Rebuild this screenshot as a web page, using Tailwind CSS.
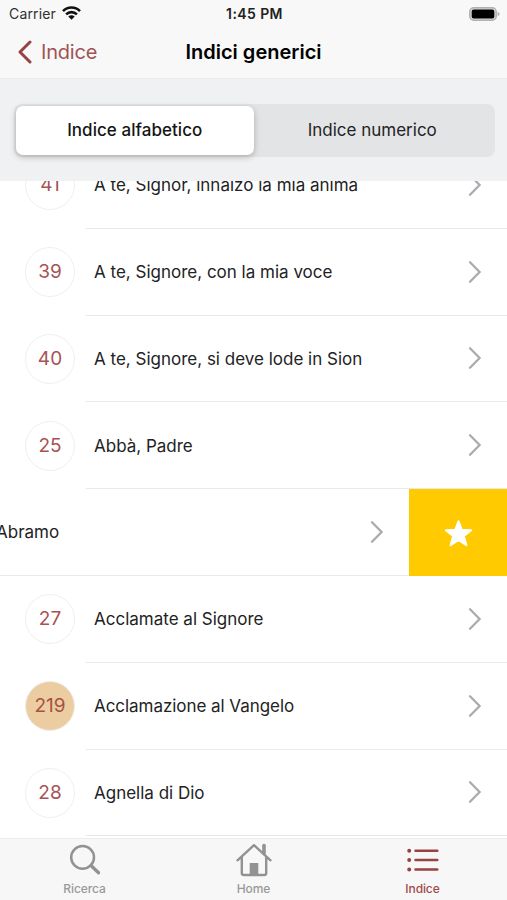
<!doctype html>
<html lang="it">
    <head>
        <meta charset="UTF-8" />
        <meta name="viewport" content="width=device-width, initial-scale=1.0" />
        <title>Indici generici</title>
        <script src="https://cdn.jsdelivr.net/npm/@tailwindcss/browser@4"></script>
    </head>
    <body class="bg-white font-['Inter',sans-serif] text-[#222224]">
        <svg class="hidden">
            <symbol id="chevron" viewBox="0 0 14 24">
                <path d="M2 2.2 11.6 12 2 21.8" fill="none" stroke="#ababad" stroke-width="2.3" stroke-linecap="round" />
            </symbol>
        </svg>

        <div class="flex h-[900px] w-[507px] flex-col overflow-hidden">
            <!-- Status bar and navigation -->
            <header class="h-[78px] shrink-0 bg-[#f8f8f8]">
                <div class="grid h-7 grid-cols-3 items-center pr-[7px] pl-[9px] text-sm text-[#303030]">
                    <div class="flex items-center gap-[6px]">
                        <span class="tracking-[0.15px]">Carrier</span>
                        <svg class="-mt-[2px] h-[14px] w-[19px]" viewBox="0 0 19 14" fill="none" stroke="#111" stroke-width="2.6">
                            <path d="M1 5.1a12 12 0 0 1 17 0" />
                            <path d="M4.1 8.4a7.6 7.6 0 0 1 10.8 0" />
                            <path d="M9.5 13.8 6.3 10.6a4.5 4.5 0 0 1 6.4 0z" fill="#111" stroke="none" />
                        </svg>
                    </div>
                    <span class="text-center font-semibold tracking-[0.4px] text-[#222]">1:45 PM</span>
                    <svg class="-mt-px h-[14px] w-[31px] justify-self-end" viewBox="0 0 31 14">
                        <rect x=".8" y=".8" width="26.4" height="12.4" rx="4" fill="#d8d8d8" stroke="#b0b0b0" stroke-width="1.5" />
                        <rect x="2.7" y="2.6" width="22.6" height="8.8" rx="2" fill="#000" />
                        <path d="M28.6 4.8q2 .7 2 2.2t-2 2.2z" fill="#b0b0b0" />
                    </svg>
                </div>
                <div class="grid h-12 grid-cols-3 items-center">
                    <div class="flex items-center gap-[9px] pl-[17px] text-xl tracking-[-0.2px] text-[#a05253]">
                        <svg class="h-6 w-[15px]" viewBox="0 0 15 24">
                            <path d="M13 2 3 12l10 10" fill="none" stroke="#974243" stroke-width="3" stroke-linecap="round" stroke-linejoin="round" />
                        </svg>
                        <span>Indice</span>
                    </div>
                    <h1 class="text-center text-xl font-semibold whitespace-nowrap text-black">Indici generici</h1>
                </div>
            </header>

            <!-- Index type switch -->
            <div class="h-[103px] shrink-0 border-t border-[#ebebed] bg-[#f0f1f3] pt-[25px] pr-3 pl-[14px]">
                <div class="grid h-[53px] grid-cols-2 rounded-lg bg-[#e3e4e6] py-[2px] pr-1 pl-[2px] text-[17px]">
                    <div class="flex items-center justify-center rounded-[7px] bg-white font-medium tracking-[0.05px] text-[#151515] shadow-[0_2px_6px_rgba(0,0,0,0.25)]">
                        Indice alfabetico
                    </div>
                    <div class="flex items-center justify-center">Indice numerico</div>
                </div>
            </div>

            <!-- Songs -->
            <main class="min-h-0 flex-1 overflow-hidden text-[17px] whitespace-nowrap">
                <ul class="-mt-[39px]">
                    <li class="flex h-[86.8px] items-center pl-[25px]">
                        <span class="flex size-[50px] items-center justify-center rounded-full border border-[#efefef] text-[19px] text-[#a75255]">41</span>
                        <div class="ml-[11px] flex h-full flex-1 items-center justify-between border-b-[1.5px] border-[#e9e9eb] pr-[25px] pl-2">
                            <span class="pt-[2px]">A te, Signor, innalzo la mia anima</span>
                            <svg class="h-6 w-[14px]"><use href="#chevron" /></svg>
                        </div>
                    </li>
                    <li class="flex h-[86.8px] items-center pl-[25px]">
                        <span class="flex size-[50px] items-center justify-center rounded-full border border-[#efefef] text-[19px] text-[#a75255]">39</span>
                        <div class="ml-[11px] flex h-full flex-1 items-center justify-between border-b-[1.5px] border-[#e9e9eb] pr-[25px] pl-2">
                            <span class="pt-[2px]">A te, Signore, con la mia voce</span>
                            <svg class="h-6 w-[14px]"><use href="#chevron" /></svg>
                        </div>
                    </li>
                    <li class="flex h-[86.8px] items-center pl-[25px]">
                        <span class="flex size-[50px] items-center justify-center rounded-full border border-[#efefef] text-[19px] text-[#a75255]">40</span>
                        <div class="ml-[11px] flex h-full flex-1 items-center justify-between border-b-[1.5px] border-[#e9e9eb] pr-[25px] pl-2">
                            <span class="pt-[2px]">A te, Signore, si deve lode in Sion</span>
                            <svg class="h-6 w-[14px]"><use href="#chevron" /></svg>
                        </div>
                    </li>
                    <li class="flex h-[86.8px] items-center pl-[25px]">
                        <span class="flex size-[50px] items-center justify-center rounded-full border border-[#efefef] text-[19px] text-[#a75255]">25</span>
                        <div class="ml-[11px] flex h-full flex-1 items-center justify-between border-b-[1.5px] border-[#e9e9eb] pr-[25px] pl-2">
                            <span class="pt-[2px]">Abbà, Padre</span>
                            <svg class="h-6 w-[14px]"><use href="#chevron" /></svg>
                        </div>
                    </li>
                    <!-- Swiped row, favourite action open -->
                    <li class="flex h-[86.8px]">
                        <div class="flex w-[409px] items-center justify-between border-b-[1.5px] border-[#e9e9eb] pr-[25px]">
                            <span class="-ml-[4px] pt-[2px]">Abramo</span>
                            <svg class="h-6 w-[14px]"><use href="#chevron" /></svg>
                        </div>
                        <div class="flex flex-1 items-center justify-center bg-[#ffcb00]">
                            <svg class="mt-[2px] h-[29px] w-[29px]" viewBox="0 0 28 28">
                                <path
                                    d="m14 2.2 3.1 8.3 9.1.4-7.1 5.5 2.5 8.9-7.6-5.1-7.6 5.1 2.5-8.9-7.1-5.5 9.1-.4z"
                                    fill="#fff"
                                    stroke="#fff"
                                    stroke-width="2"
                                    stroke-linejoin="round"
                                />
                            </svg>
                        </div>
                    </li>
                    <li class="flex h-[86.8px] items-center pl-[25px]">
                        <span class="flex size-[50px] items-center justify-center rounded-full border border-[#efefef] text-[19px] text-[#a75255]">27</span>
                        <div class="ml-[11px] flex h-full flex-1 items-center justify-between border-b-[1.5px] border-[#e9e9eb] pr-[25px] pl-2">
                            <span class="pt-[2px]">Acclamate al Signore</span>
                            <svg class="h-6 w-[14px]"><use href="#chevron" /></svg>
                        </div>
                    </li>
                    <li class="flex h-[86.8px] items-center pl-[25px]">
                        <span class="flex size-[50px] items-center justify-center rounded-full border border-[#efefef] bg-[#ebcda1] text-[19px] text-[#a75245]">219</span>
                        <div class="ml-[11px] flex h-full flex-1 items-center justify-between border-b-[1.5px] border-[#e9e9eb] pr-[25px] pl-2">
                            <span class="pt-[2px] tracking-[-0.05px]">Acclamazione al Vangelo</span>
                            <svg class="h-6 w-[14px]"><use href="#chevron" /></svg>
                        </div>
                    </li>
                    <li class="flex h-[86.8px] items-center pl-[25px]">
                        <span class="flex size-[50px] items-center justify-center rounded-full border border-[#efefef] text-[19px] text-[#a75255]">28</span>
                        <div class="ml-[11px] flex h-full flex-1 items-center justify-between border-b-[1.5px] border-[#e9e9eb] pr-[25px] pl-2">
                            <span class="pt-[2px]">Agnella di Dio</span>
                            <svg class="h-6 w-[14px]"><use href="#chevron" /></svg>
                        </div>
                    </li>
                </ul>
            </main>

            <!-- Tab bar -->
            <nav class="grid h-[62px] shrink-0 grid-cols-3 border-t border-[#ececec] bg-[#f7f7f7] text-xs font-medium tracking-[-0.1px] text-[#999]">
                <div class="flex flex-col items-center pt-[3px]">
                    <svg class="h-9 w-9" viewBox="0 0 36 36" fill="none" stroke="#929292" stroke-linecap="round">
                        <circle cx="15.6" cy="15.4" r="11.4" stroke-width="2.5" />
                        <path d="m24 23.5 7.5 7.3" stroke-width="3.3" />
                    </svg>
                    <span class="mt-[3px]">Ricerca</span>
                </div>
                <div class="flex flex-col items-center pt-[3px]">
                    <svg class="h-9 w-9" viewBox="0 0 36 36" fill="none" stroke="#929292" stroke-width="2.4" stroke-linecap="round" stroke-linejoin="round">
                        <path d="M1.5 18.3 18 3.2l16.5 15.1M5.8 15v16q0 2 2 2h20.4q2 0 2-2V15" />
                        <path d="M28 3.5v8" stroke-width="3.6" />
                        <path d="M13.7 21h8.6v12h-8.6z" fill="#929292" stroke="none" />
                    </svg>
                    <span class="mt-[3px]">Home</span>
                </div>
                <div class="flex flex-col items-center pt-[3px] text-[#a04b4b]">
                    <svg class="h-9 w-9" viewBox="0 0 36 36" fill="none" stroke="#974243" stroke-width="2.5" stroke-linecap="round">
                        <path d="M10.5 8.8h21.8M10.5 18.1h21.8M10.5 27.4h21.8" />
                        <path d="M4.2 8.8h.01M4.2 18.1h.01M4.2 27.4h.01" stroke-width="4" />
                    </svg>
                    <span class="mt-[3px]">Indice</span>
                </div>
            </nav>
        </div>
    </body>
</html>
